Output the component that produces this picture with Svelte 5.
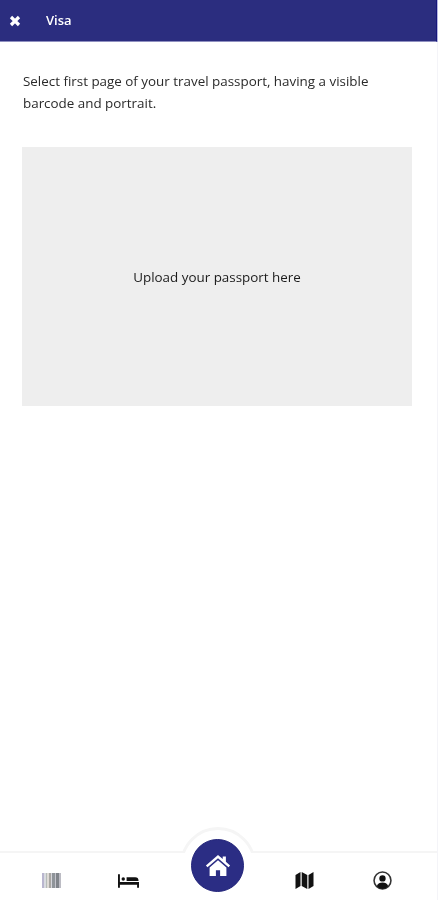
<script>
  const passportHint = "Select first page of your travel passport, having a visible barcode and portrait.";
  // barcode stripes, colours picked off the blurred original
  const bars = [
    { w: 2, c: "#b9b6cf" },
    { w: 2, c: "#d9dbe0" },
    { w: 1, c: "#b5bcb8" },
    { w: 2, c: "#dedad6" },
    { w: 2, c: "#a8a6a2" },
    { w: 1, c: "#d6d6dc" },
    { w: 3, c: "#8f9499" },
    { w: 1, c: "#c4c4cc" },
    { w: 3, c: "#80848a" },
    { w: 2, c: "#bcbcc4" }
  ];
</script>

<div class="screen">
  <header class="topbar">
    <svg class="close" viewBox="0 0 12 12" aria-hidden="true">
      <path d="M2 2l8 8M10 2l-8 8" />
    </svg>
    <span class="title">Visa</span>
  </header>

  <main class="content">
    <p class="hint">{passportHint}</p>
    <div class="upload">Upload your passport here</div>
  </main>

  <nav class="tabs">
    <div class="tab">
      <div class="barcode">
        {#each bars as bar}
          <span style="width: {bar.w}px; background: {bar.c}"></span>
        {/each}
      </div>
    </div>
    <div class="tab">
      <svg class="bed" viewBox="0 0 22 14" aria-hidden="true">
        <path d="M0 0h2v8h20v6h-2v-3H2v3H0z" />
        <circle cx="5.500" cy="5" r="1.800" />
        <path d="M9 3h9a3.500 3.500 0 0 1 3.500 3.500V7H9z" />
      </svg>
    </div>
    <div class="tab home-slot">
      <div class="home-ring">
        <button class="home" aria-label="Home">
          <svg viewBox="0 0 24 20" aria-hidden="true">
            <path d="M12 0L0.500 10l1.500 1.700L12 3l10 8.700 1.500-1.700-4-3.500V1.500h-3v2.400z" />
            <path d="M12 5L4 12v8h6v-5.500h4V20h6v-8z" />
          </svg>
        </button>
      </div>
    </div>
    <div class="tab">
      <svg class="map" viewBox="0 0 18 17" aria-hidden="true">
        <path d="M0 3l5-3v14l-5 3zM6.200 0l5.600 3v14l-5.600-3zM13 3l5-3v14l-5 3z" />
      </svg>
    </div>
    <div class="tab">
      <svg class="user" viewBox="0 0 18 18" aria-hidden="true">
        <circle class="user-ring" cx="9" cy="9" r="8" />
        <circle cx="9" cy="7" r="3" />
        <path d="M3.500 14.500C4.500 11.800 6.500 11 9 11s4.500.8 5.500 3.500A8 8 0 0 1 9 17a8 8 0 0 1-5.500-2.500z" />
      </svg>
    </div>
  </nav>
</div>

<style>
  :global(body) {
    margin: 0;
    background: #fff;
  }

  .screen {
    box-sizing: border-box;
    width: 438px;
    height: 100vh;
    display: flex;
    flex-direction: column;
    border-right: 1px solid #f4f4f8;
    font-family: "Open Sans", "Liberation Sans", sans-serif;
    color: #2a2a2a;
    filter: blur(0.4px);
  }

  .topbar {
    height: 41px;
    flex: none;
    display: flex;
    align-items: center;
    gap: 25px;
    padding-left: 9px;
    background: #2b2d7f;
    border-bottom: 1px solid #8f90c0;
    border-right: 1px solid #16167c;
    box-shadow: 1px 0 0 #b5b5e0;
    color: #fff;
  }

  .close {
    width: 12px;
    height: 12px;
    fill: none;
    stroke: #fff;
    stroke-width: 3.200;
  }

  .title {
    font-size: 13px;
    font-weight: 600;
    padding-bottom: 1px;
  }

  .content {
    flex: 1;
    padding: 28px 25px 0 22px;
  }

  .hint {
    margin: 0 0 33px;
    padding-left: 1px;
    font-size: 13.400px;
    line-height: 22px;
  }

  .upload {
    height: 259px;
    display: flex;
    align-items: center;
    justify-content: center;
    padding-top: 1px;
    box-sizing: border-box;
    background: #eee;
    font-size: 13.400px;
    color: #1a1a1a;
  }

  .tabs {
    height: 47px;
    flex: none;
    display: grid;
    grid-template-columns: 103px 51px 127px 47px 1fr;
    border-top: 2px solid #f5f5f5;
  }

  .tab {
    display: flex;
    align-items: center;
    justify-content: center;
    padding-top: 8px;
  }

  .home-slot {
    position: relative;
  }

  .home-ring {
    position: absolute;
    left: 50%;
    top: -26px;
    transform: translateX(-50%);
    width: 76px;
    height: 76px;
    display: flex;
    align-items: center;
    justify-content: center;
  }

  /* arc above the tab bar, also hides the bar's line behind the button */
  .home-ring::before {
    content: "";
    position: absolute;
    inset: 0;
    box-sizing: border-box;
    border: 3px solid #f5f5f5;
    border-radius: 50%;
    background: #fff;
    clip-path: inset(0 0 50px 0);
  }

  .home {
    position: relative;
    box-sizing: border-box;
    width: 53px;
    height: 53px;
    display: flex;
    align-items: center;
    justify-content: center;
    padding: 0;
    border: 1px solid #23257a;
    border-radius: 50%;
    background: #2b2d84;
  }

  .home svg {
    width: 26px;
    height: 21px;
    fill: #fff;
  }

  .barcode {
    height: 15px;
    display: flex;
  }

  .bed {
    width: 21px;
    height: 14px;
    fill: #111;
  }

  .map {
    width: 19px;
    height: 17px;
    fill: #111;
  }

  .user {
    width: 19px;
    height: 19px;
    fill: #111;
  }

  .user-ring {
    fill: #fff;
    stroke: #333;
    stroke-width: 1.500;
  }
</style>
